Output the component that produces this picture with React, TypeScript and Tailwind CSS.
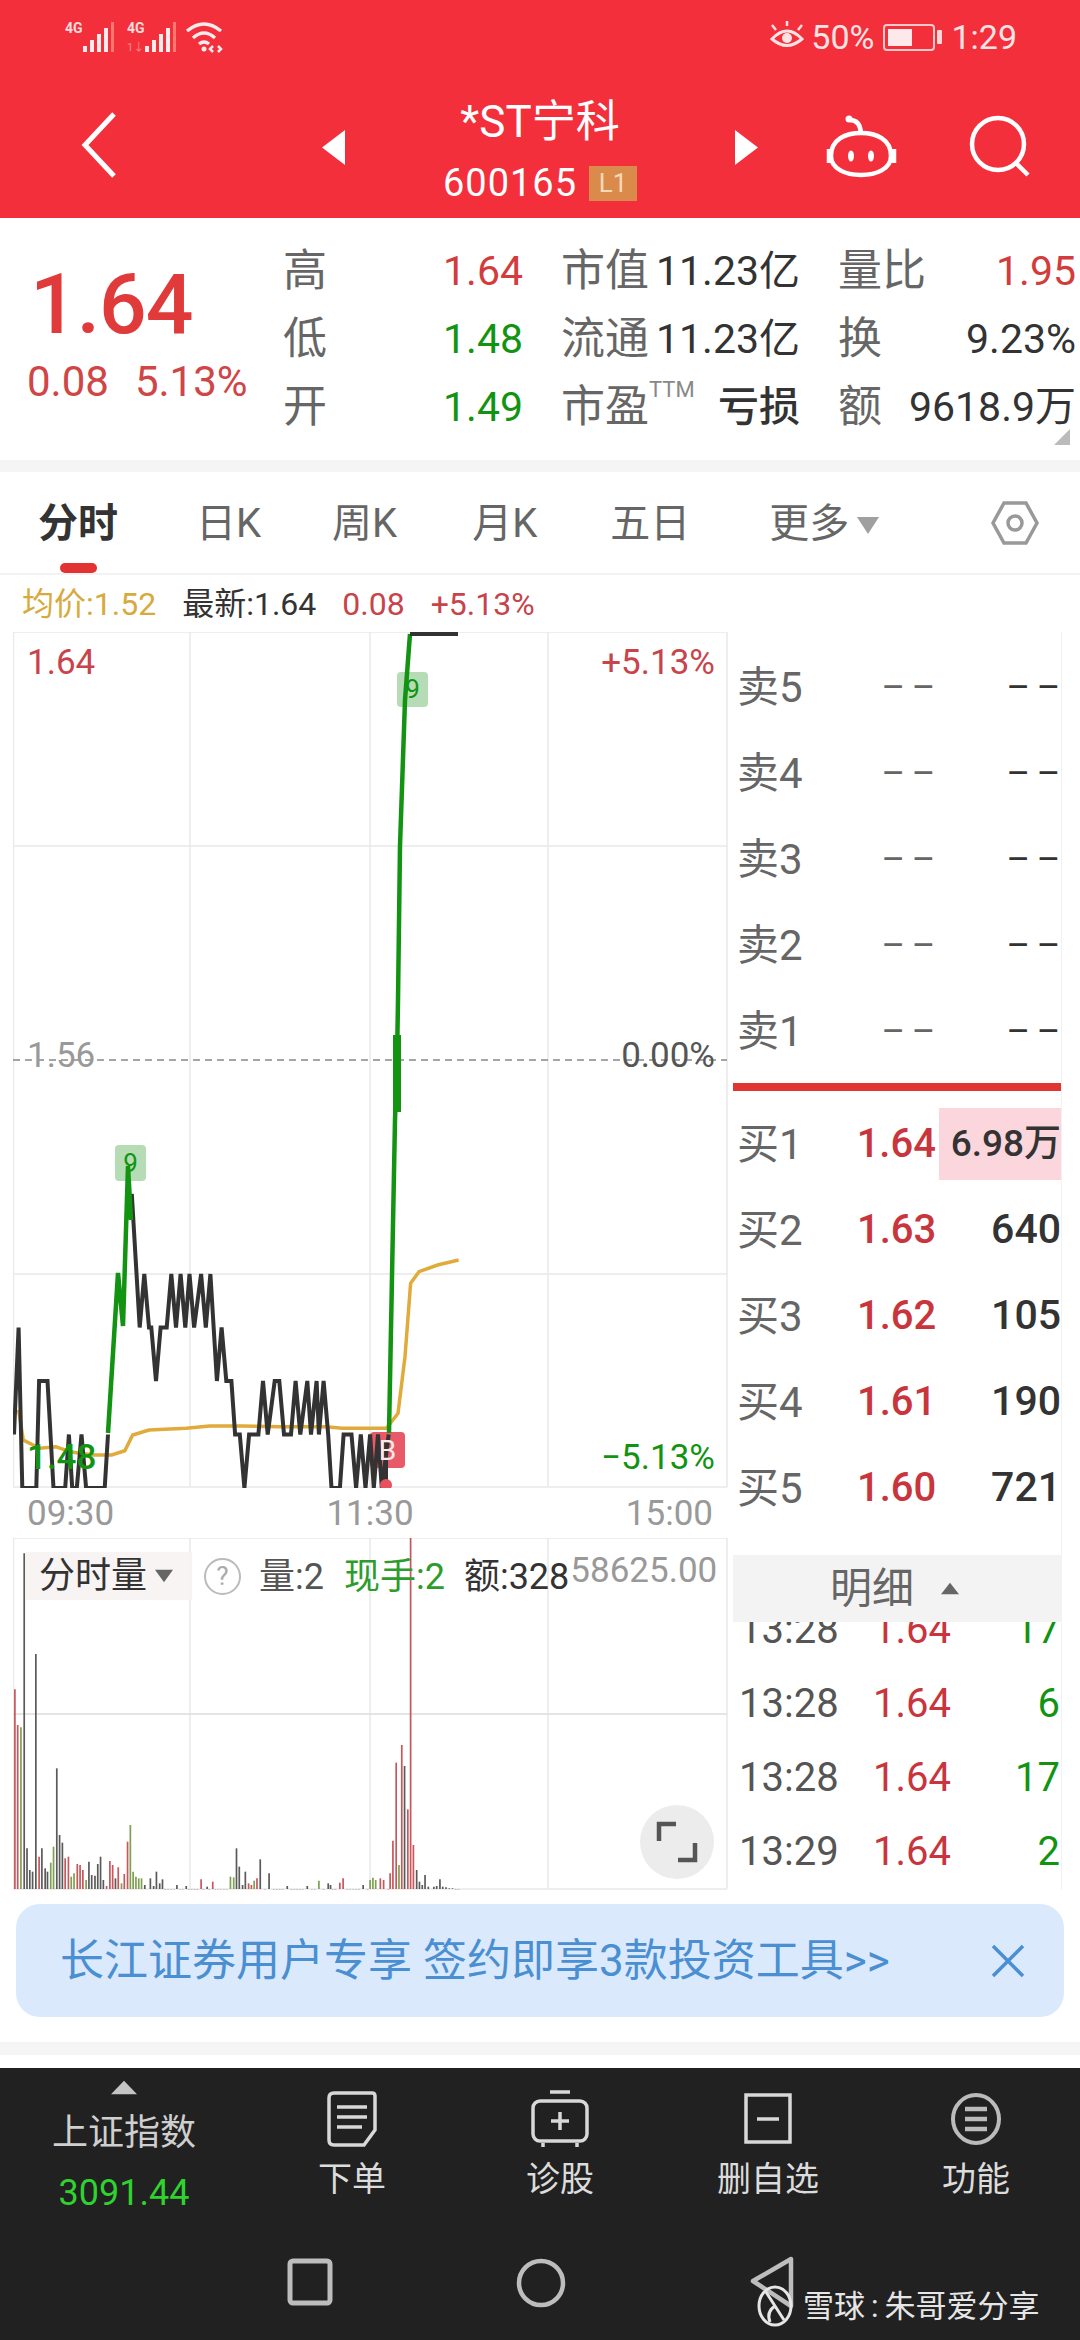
import React from "react";

// price levels are read off the chart: 0.01 is about 53.5px, 1.64 sits on the top edge
const priceY = (level: number) => 632 + (1.64 - level) * 5350;
const zx = (x: number) => x / 2.148;
const zy = (y: number) => 1030 + y / 3;

const blackLine: Array<[number, number]> = [
  [30, 1.49], [40, 1.51], [48, 1.48], [78, 1.48], [84, 1.5], [102, 1.5], [115, 1.48], [140, 1.48], [148, 1.49],
  [155, 1.48], [165, 1.48], [175, 1.49], [185, 1.48], [225, 1.48], [232, 1.49],
];
const blackLine2: Array<[number, number]> = [
  [283, 1.535], [300, 1.51], [310, 1.52], [320, 1.51], [325, 1.51], [335, 1.5], [345, 1.51], [358, 1.51], [368, 1.52],
  [378, 1.51], [388, 1.52], [398, 1.51], [407, 1.52], [417, 1.51], [432, 1.52], [442, 1.51], [452, 1.52], [466, 1.5],
  [476, 1.51], [486, 1.5], [497, 1.5], [505, 1.49], [515, 1.49], [525, 1.48], [535, 1.49], [555, 1.49], [565, 1.5],
  [575, 1.49], [590, 1.5], [600, 1.5], [610, 1.49], [625, 1.49], [635, 1.5], [645, 1.49], [660, 1.5], [668, 1.49],
  [680, 1.5], [685, 1.49], [695, 1.5], [705, 1.49], [712, 1.48], [730, 1.48], [738, 1.49], [755, 1.49], [765, 1.48],
  [775, 1.49], [785, 1.48], [795, 1.49], [803, 1.48], [812, 1.49], [820, 1.48], [835, 1.49],
];
const avgLine: Array<[number, number]> = [
  [40, 1140], [50, 1230], [85, 1255], [120, 1250], [150, 1265], [200, 1275], [240, 1275], [268, 1262], [285, 1215],
  [320, 1200], [400, 1195], [450, 1188], [520, 1188], [600, 1190], [700, 1190], [735, 1195], [830, 1195], [855, 1150],
  [870, 980], [882, 760], [900, 725], [940, 705], [985, 690],
];

const toPoints = (rows: Array<[number, number]>) => rows.map(([x, l]) => `${zx(x).toFixed(1)},${priceY(l).toFixed(1)}`).join(" ");

// volume bars: zoomed x, zoomed top, colour
const bars: Array<[number, number, string]> = [
  [32, 478, "r"], [38, 585, "r"], [45, 592, "g"], [52, 70, "k"], [58, 955, "k"], [64, 1020, "k"], [70, 1025, "k"], [77, 372, "k"],
  [84, 980, "r"], [90, 955, "k"], [97, 1015, "k"], [102, 1025, "k"], [109, 998, "g"], [115, 950, "g"], [122, 715, "k"], [128, 915, "k"],
  [134, 938, "k"], [140, 985, "r"], [147, 980, "r"], [153, 1040, "g"], [159, 1030, "g"], [166, 1002, "r"], [172, 1005, "r"], [178, 1020, "r"],
  [185, 1050, "g"], [191, 995, "k"], [197, 1035, "k"], [204, 1037, "k"], [210, 1002, "k"], [216, 980, "k"], [222, 1050, "k"], [229, 1068, "r"],
  [236, 993, "r"], [242, 1005, "r"], [248, 1045, "k"], [254, 1012, "r"], [261, 1060, "g"], [267, 1032, "r"], [274, 935, "r"], [280, 885, "g"],
  [286, 1025, "g"], [292, 1040, "g"], [298, 1045, "g"], [304, 1045, "g"], [311, 1065, "k"], [323, 1045, "k"], [330, 1068, "k"], [336, 1025, "k"],
  [343, 1060, "k"], [349, 1048, "k"], [380, 1065, "k"], [400, 1068, "k"], [432, 1048, "r"], [445, 1070, "k"], [457, 1055, "r"], [495, 1040, "g"],
  [502, 1042, "g"], [508, 955, "k"], [514, 1010, "k"], [521, 1065, "k"], [527, 1025, "k"], [534, 1060, "r"], [540, 1065, "r"], [546, 1052, "g"],
  [552, 1045, "r"], [559, 988, "k"], [578, 1030, "k"], [617, 1068, "k"], [660, 1068, "k"], [685, 1052, "g"], [705, 1060, "k"], [710, 1065, "k"],
  [730, 1058, "r"], [737, 1045, "r"], [780, 1065, "k"], [795, 1050, "g"], [801, 1043, "g"], [807, 1050, "g"], [817, 1045, "r"], [824, 1050, "r"],
  [838, 1030, "r"], [844, 932, "r"], [851, 698, "r"], [857, 1005, "g"], [863, 645, "r"], [869, 708, "k"], [876, 838, "r"], [882, 22, "r"],
  [888, 945, "r"], [895, 1020, "k"], [901, 1055, "k"], [907, 1065, "k"], [913, 1035, "k"], [920, 1070, "k"], [932, 1070, "k"], [938, 1068, "k"],
  [945, 1048, "k"], [951, 1070, "k"], [958, 1072, "k"], [965, 1075, "k"], [972, 1075, "k"], [985, 1078, "k"],
];
const barColor: Record<string, string> = { r: "#c9565a", g: "#7f9f52", k: "#5a5a5a" };

const allBars = (() => {
  const out = [...bars];
  for (let x = 355, i = 0; x < 985; x += 6.3, i++) {
    if (!bars.some((b) => Math.abs(b[0] - x) < 4)) out.push([x, 1078 - (i * 7) % 7, "k"]);
  }
  return out;
})();

const asks = ["卖5", "卖4", "卖3", "卖2", "卖1"];
const bids = [
  { label: "买1", price: "1.64", vol: "6.98万" },
  { label: "买2", price: "1.63", vol: "640" },
  { label: "买3", price: "1.62", vol: "105" },
  { label: "买4", price: "1.61", vol: "190" },
  { label: "买5", price: "1.60", vol: "721" },
];
const ticks = [
  { t: "13:28", v: "17" },
  { t: "13:28", v: "6" },
  { t: "13:28", v: "17" },
  { t: "13:29", v: "2" },
];

function Signal({ extra }: { extra?: boolean }) {
  return (
    <div className="relative w-[54px] h-[34px]">
      <span className="absolute left-0 top-[1px] text-[14px] leading-[14px] font-bold text-[#fbdada]">4G</span>
      {extra && <span className="absolute left-0 bottom-0 text-[11px] leading-[12px] text-[#f88]">1↓</span>}
      <svg className="absolute left-[17px] top-0" width="36" height="34" viewBox="0 0 36 34" fill="#fdeaea">
        <rect x="1" y="26" width="4" height="6" />
        <rect x="8" y="20" width="4" height="12" />
        <rect x="15" y="14" width="4" height="18" />
        <rect x="22" y="8" width="4" height="24" />
        <rect x="29" y="2" width="3" height="30" fill="#f98" opacity="0.7" />
      </svg>
    </div>
  );
}

function Tri({ dir, className }: { dir: "up" | "down" | "left" | "right"; className: string }) {
  const pts = { up: "50,5 100,95 0,95", down: "0,5 100,5 50,95", left: "100,0 100,100 0,50", right: "0,0 0,100 100,50" }[dir];
  return (
    <svg className={className} viewBox="0 0 100 100" preserveAspectRatio="none" fill="currentColor">
      <polygon points={pts} />
    </svg>
  );
}

function Header() {
  return (
    <div className="h-[218px] bg-[#f42f3c] text-white shrink-0">
      <div className="h-[74px] flex items-center pl-[65px] pr-[63px]">
        <Signal />
        <div className="w-[8px]" />
        <Signal extra />
        <svg className="ml-[4px]" width="40" height="34" viewBox="0 0 40 34" fill="none" stroke="#fdeaea" strokeWidth="3.5">
          <path d="M2 11 Q19 -3 36 11" />
          <path d="M8 18 Q19 8 30 18" />
          <path d="M14 24 Q19 20 24 24" />
          <circle cx="19" cy="29" r="2.5" fill="#fdeaea" stroke="none" />
          <path d="M28 26 l-3 3 3 3 M33 26 l3 3 -3 3" strokeWidth="2.5" />
        </svg>
        <div className="flex-1" />
        <svg width="36" height="32" viewBox="0 0 36 32" fill="none" stroke="#fde3e3" strokeWidth="3">
          <path d="M3 18 Q18 2 33 18 Q18 31 3 18Z" />
          <circle cx="18" cy="17" r="5" fill="#fde3e3" stroke="none" />
          <path d="M7 9 L3 4 M18 5 V0 M29 9 L33 4" strokeWidth="2.5" />
        </svg>
        <span className="ml-[6px] text-[34px] leading-none text-[#fde3e3]">50%</span>
        <div className="ml-[9px] w-[52px] h-[27px] border-2 border-[#fbc9c9] rounded-[4px] p-[3px]">
          <div className="w-[24px] h-full bg-[#fde9e9]" />
        </div>
        <div className="ml-[2px] w-[5px] h-[14px] bg-[#fbd9d9] rounded-[1px]" />
        <span className="ml-[9px] text-[34px] leading-none text-[#fde3e3]">1:29</span>
      </div>
      <div className="h-[144px] flex items-start">
        <svg className="ml-[80px] mt-[38px]" width="38" height="66" viewBox="0 0 38 66" fill="none" stroke="#fff" strokeWidth="5">
          <path d="M34 2 L5 33 L34 64" />
        </svg>
        <Tri dir="left" className="ml-[204px] mt-[56px] w-[23px] h-[35px]" />
        <div className="w-[390px] flex flex-col items-center">
          <div className="mt-[22px] text-[44px] leading-[52px]">*ST宁科</div>
          <div className="mt-[13px] flex items-center">
            <span className="text-[38px] leading-[44px] tracking-[1px]">600165</span>
            <span className="ml-[12px] w-[48px] h-[35px] bg-[#da8b4b] text-[#f6d9b9] text-[26px] leading-[35px] text-center">L1</span>
          </div>
        </div>
        <Tri dir="right" className="mt-[56px] w-[23px] h-[35px]" />
        <svg className="ml-[68px] mt-[39px]" width="72" height="66" viewBox="0 0 72 66" fill="none" stroke="#fff" strokeWidth="4.5">
          <path d="M24 7 Q34 7 35 20" />
          <circle cx="23" cy="6" r="3.5" fill="#fff" stroke="none" />
          <path d="M5 43 C5 26 20 20 35 20 C50 20 65 26 65 43 C65 56 50 62 35 62 C20 62 5 56 5 43Z" />
          <path d="M3 36 V50 M68 36 V50" />
          <ellipse cx="25" cy="43" rx="3" ry="5.5" fill="#fff" stroke="none" />
          <ellipse cx="45" cy="43" rx="3" ry="5.5" fill="#fff" stroke="none" />
        </svg>
        <svg className="ml-[70px] mt-[41px]" width="64" height="64" viewBox="0 0 64 64" fill="none" stroke="#fff" strokeWidth="4.5">
          <circle cx="30" cy="29" r="26" />
          <path d="M47 47 L60 60" />
        </svg>
      </div>
    </div>
  );
}

function Cell({ label, value, valueClass }: { label: React.ReactNode; value: string; valueClass: string }) {
  return (
    <div className="flex items-center justify-between">
      <span className="text-[44px] leading-none text-[#666] whitespace-nowrap">{label}</span>
      <span className={`text-[41px] leading-none whitespace-nowrap ${valueClass}`}>{value}</span>
    </div>
  );
}

function Quote() {
  return (
    <div className="h-[242px] shrink-0 bg-white flex relative">
      <div className="w-[283px] pl-[27px] pt-[43px]">
        <div className="pl-[3px] text-[84px] leading-[88px] font-medium text-[#e03a3a] tracking-[-1px]">1.64</div>
        <div className="mt-[9px] text-[42px] leading-[48px] text-[#d04545] whitespace-nowrap">0.08<span className="ml-[26px]">5.13%</span></div>
      </div>
      <div className="flex-1 pt-[19px] grid grid-cols-[240px_239px_238px] gap-x-[38px] auto-rows-[68px] items-center">
        <Cell label="高" value="1.64" valueClass="text-[#d23c3c]" />
        <Cell label="市值" value="11.23亿" valueClass="text-[#333]" />
        <Cell label="量比" value="1.95" valueClass="text-[#d23c3c]" />
        <Cell label="低" value="1.48" valueClass="text-[#129412]" />
        <Cell label="流通" value="11.23亿" valueClass="text-[#333]" />
        <Cell label="换" value="9.23%" valueClass="text-[#333]" />
        <Cell label="开" value="1.49" valueClass="text-[#129412]" />
        <Cell label={<>市盈<sup className="text-[22px] text-[#888] align-[14px]">TTM</sup></>} value="亏损" valueClass="text-[#333] font-medium" />
        <Cell label="额" value="9618.9万" valueClass="text-[#333]" />
      </div>
      <svg className="absolute right-[10px] bottom-[15px]" width="16" height="16" viewBox="0 0 16 16" fill="#bbb">
        <polygon points="16,0 16,16 0,16" />
      </svg>
    </div>
  );
}

function Tabs() {
  return (
    <div className="h-[103px] shrink-0 bg-white border-b-2 border-[#f2f2f2] flex items-start text-[40px] leading-[44px] text-[#666]">
      <div className="ml-[38px] relative mt-[30px] font-bold text-[#333]">
        分时
        <div className="absolute left-[22px] top-[61px] w-[37px] h-[10px] rounded-full bg-[#e33232]" />
      </div>
      <div className="ml-[78px] mt-[30px]">日K</div>
      <div className="ml-[71px] mt-[30px]">周K</div>
      <div className="ml-[75px] mt-[30px]">月K</div>
      <div className="ml-[73px] mt-[30px]">五日</div>
      <div className="ml-[79px] mt-[30px]">更多</div>
      <Tri dir="down" className="ml-[8px] mt-[44px] w-[22px] h-[19px] text-[#a0a0a0]" />
      <svg className="ml-[111px] mt-[28px]" width="50" height="46" viewBox="0 0 50 46" fill="none" stroke="#999" strokeWidth="3.5">
        <polygon points="14,3 36,3 47,23 36,43 14,43 3,23" />
        <circle cx="25" cy="23" r="7" />
      </svg>
    </div>
  );
}

function PriceChart() {
  return (
    <div className="relative h-[856px] ml-[13px] w-[715px]">
      <svg className="absolute left-0 top-0" width="715" height="856" viewBox="13 632 715 856" fill="none">
        <g stroke="#e9e9e9" strokeWidth="1.5">
          {[632, 846, 1274, 1487].map((y) => <line key={y} x1="13" x2="727" y1={y} y2={y} />)}
          {[13.5, 190, 370, 548, 727].map((x) => <line key={x} x1={x} x2={x} y1="632" y2="1487" />)}
        </g>
        <line x1="13" x2="727" y1="1060" y2="1060" stroke="#888" strokeWidth="1.5" strokeDasharray="7 5" />
        <polyline points={avgLine.map(([x, y]) => `${zx(x).toFixed(1)},${zy(y).toFixed(1)}`).join(" ")} stroke="#e0ab3a" strokeWidth="3.5" />
        <rect x="397" y="672" width="31" height="35" rx="4" fill="#b5dcb5" />
        <rect x="115" y="1145" width="31" height="36" rx="4" fill="#b5dcb5" />
        <rect x="370" y="1432" width="35" height="36" rx="4" fill="#e85a68" />
        <polyline points={toPoints(blackLine)} stroke="#333" strokeWidth="4" />
        <polyline points={toPoints(blackLine2)} stroke="#333" strokeWidth="4" />
        <line x1="386" y1="1440" x2="386" y2="1485" stroke="#333" strokeWidth="4" />
        <polyline points="108,1433 118,1273 123,1326 128,1166 131,1220" stroke="#129412" strokeWidth="4.5" />
        <polyline points="389,1433 395,1120 397,1060 398,1000 400,846 405,700 410,634" stroke="#129412" strokeWidth="4.5" />
        <line x1="397" y1="1035" x2="397" y2="1112" stroke="#129412" strokeWidth="8" />
        <line x1="410" y1="634" x2="458" y2="634" stroke="#333" strokeWidth="4" />
        <circle cx="386" cy="1485" r="6" fill="#e8505f" />
      </svg>
      <span className="absolute left-[14px] top-[11px] text-[35px] leading-[40px] text-[#c8434a]">1.64</span>
      <span className="absolute right-[13px] top-[11px] text-[35px] leading-[40px] text-[#c8434a]">+5.13%</span>
      <span className="absolute left-[14px] top-[404px] text-[35px] leading-[40px] text-[#999]">1.56</span>
      <span className="absolute right-[13px] top-[404px] text-[35px] leading-[40px] text-[#555]">0.00%</span>
      <span className="absolute left-[14px] top-[806px] text-[35px] leading-[40px] font-medium text-[#129412]">1.48</span>
      <span className="absolute right-[13px] top-[806px] text-[35px] leading-[40px] text-[#129412]">−5.13%</span>
      <span className="absolute left-[384px] top-[42px] w-[31px] text-center text-[26px] leading-[30px] text-[#129412]">9</span>
      <span className="absolute left-[102px] top-[516px] w-[31px] text-center text-[26px] leading-[30px] text-[#129412]">9</span>
      <span className="absolute left-[357px] top-[802px] w-[35px] text-center text-[28px] leading-[34px] text-[#fdeaea]">B</span>
    </div>
  );
}

function VolumeChart() {
  return (
    <div className="relative h-[352px] ml-[13px] w-[715px]">
      <svg className="absolute left-0 top-0" width="715" height="352" viewBox="13 1538 715 352" fill="none">
        <g stroke="#e9e9e9" strokeWidth="1.5">
          {[1538, 1889].map((y) => <line key={y} x1="13" x2="727" y1={y} y2={y} />)}
          {[13.5, 190, 370, 548, 727].map((x) => <line key={x} x1={x} x2={x} y1="1538" y2="1889" />)}
        </g>
        <line x1="13" x2="727" y1="1714" y2="1714" stroke="#dcdcdc" strokeWidth="1.5" />
        {allBars.map(([x, top, c], i) => (
          <line key={i} x1={zx(x)} x2={zx(x)} y1={1530 + top / 3} y2="1889" stroke={barColor[c]} strokeWidth="1.7" />
        ))}
      </svg>
      <div className="relative flex items-start pt-[14px] whitespace-nowrap">
        <div className="ml-[12px] w-[167px] h-[48px] bg-[#f7f3f3]/90 flex items-center pl-[14px] text-[36px] leading-none text-[#333]">
          分时量
          <Tri dir="down" className="ml-[8px] w-[18px] h-[14px] text-[#666]" />
        </div>
        <div className="ml-[12px] mt-[6px] w-[37px] h-[37px] rounded-full border-2 border-[#bbb] text-center text-[26px] leading-[33px] text-[#aaa]">?</div>
        <div className="ml-[18px] mt-[6px] text-[36px] leading-[38px] text-[#555]">量:2</div>
        <div className="ml-[20px] mt-[6px] text-[36px] leading-[38px] text-[#2c9c2c]">现手:2</div>
        <div className="ml-[19px] mt-[6px] text-[36px] leading-[38px] text-[#333]">额:328</div>
        <div className="ml-[1px] text-[35px] leading-[38px] text-[#999]">58625.00</div>
      </div>
      <div className="absolute left-[627px] top-[267px] w-[74px] h-[74px] rounded-full bg-[#ececec] flex items-center justify-center">
        <svg width="42" height="42" viewBox="0 0 42 42" fill="none" stroke="#555" strokeWidth="4.5">
          <path d="M3 20 V3 H20 M39 22 V39 H22" />
        </svg>
      </div>
    </div>
  );
}

function OrderBook() {
  return (
    <div className="w-[329px] ml-[5px] h-[1258px] overflow-hidden border-r border-[#f2f2f2]">
      <div className="pt-[12px]">
        {asks.map((a) => (
          <div key={a} className="h-[86px] flex items-center pl-[4px] pr-[1px] text-[42px] text-[#666]">
            <span className="w-[146px] whitespace-nowrap">{a}</span>
            <span className="flex-1 text-[26px] font-bold text-[#666] tracking-[2px]">— —</span>
            <span className="text-[26px] font-bold text-[#333] tracking-[2px]">— —</span>
          </div>
        ))}
      </div>
      <div className="mt-[9px] h-[8px] bg-[#e03530]" />
      <div className="mt-[10px]">
        {bids.map((b, i) => (
          <div key={b.label} className="h-[86px] flex items-center pl-[4px] text-[40px] text-[#666]">
            <span className="w-[120px] text-[42px] whitespace-nowrap">{b.label}</span>
            <span className="text-[#c8353c] font-medium w-[82px]">{b.price}</span>
            {i === 0 ? (
              <span className="ml-[1px] w-[122px] h-[72px] bg-[#fbd6dd] text-right text-[37px] leading-[72px] text-[#333] font-medium whitespace-nowrap">{b.vol}</span>
            ) : (
              <span className="flex-1 text-right text-[#333] font-medium text-[41px]">{b.vol}</span>
            )}
          </div>
        ))}
      </div>
      <div className="relative z-10 mt-[24px] h-[67px] bg-[#f3f3f3] flex items-center text-[42px] text-[#666]">
        <span className="ml-[97px]">明细</span>
        <Tri dir="up" className="ml-[27px] w-[18px] h-[13px] text-[#666]" />
      </div>
      <div className="-mt-[29px]">
        {ticks.map((row, i) => (
          <div key={i} className="h-[74px] flex items-center pl-[6px] pr-[1px] text-[40px]">
            <span className="w-[134px] text-[#555]">{row.t}</span>
            <span className="text-[#c8353c]">1.64</span>
            <span className="flex-1 text-right text-[#129412]">{row.v}</span>
          </div>
        ))}
      </div>
    </div>
  );
}

function Banner() {
  return (
    <div className="shrink-0 bg-white pt-[14px] px-[16px] pb-[25px] border-b-[13px] border-[#f5f5f5]">
      <div className="h-[113px] bg-[#dbe9fc] rounded-[24px] flex items-center pl-[44px] pr-[38px] text-[44px] text-[#4a8fd2]">
        <span className="whitespace-nowrap">长江证券用户专享 签约即享3款投资工具&gt;&gt;</span>
        <div className="flex-1" />
        <svg width="36" height="36" viewBox="0 0 36 36" fill="none" stroke="#4a8fd2" strokeWidth="3.5">
          <path d="M3 3 L33 33 M33 3 L3 33" />
        </svg>
      </div>
    </div>
  );
}

const Stroke = { fill: "none", stroke: "#d8d8d8", strokeWidth: 3.5 };

function BottomBar() {
  return (
    <div className="flex-1 bg-[#212121] relative">
      <div className="h-[190px] flex">
        <div className="w-[248px] flex flex-col items-center pt-[12px]">
          <Tri dir="up" className="w-[26px] h-[15px] text-[#c4c4c4]" />
          <div className="mt-[16px] text-[36px] leading-[44px] text-[#cfcfcf]">上证指数</div>
          <div className="mt-[17px] text-[36px] leading-[42px] text-[#2fd22f]">3091.44</div>
        </div>
        <div className="flex-1 grid grid-cols-4">
          {[
            {
              label: "下单",
              icon: (
                <svg width="52" height="58" viewBox="0 0 52 58" {...Stroke}>
                  <path d="M8 3 H46 Q49 3 49 6 V40 L38 55 H8 Q3 55 3 50 V8 Q3 3 8 3Z" />
                  <path d="M11 17 H41 M11 27 H41 M11 37 H36" />
                </svg>
              ),
            },
            {
              label: "诊股",
              icon: (
                <svg width="58" height="58" viewBox="0 0 58 58" {...Stroke}>
                  <path d="M19 2 H39" />
                  <rect x="2" y="11" width="54" height="40" rx="7" />
                  <path d="M29 22 V40 M20 31 H38 M12 53 V57 M46 53 V57" />
                </svg>
              ),
            },
            {
              label: "删自选",
              icon: (
                <svg width="50" height="52" viewBox="0 0 50 52" {...Stroke}>
                  <rect x="3" y="2" width="44" height="47" />
                  <path d="M14 26 H36" />
                </svg>
              ),
            },
            {
              label: "功能",
              icon: (
                <svg width="52" height="54" viewBox="0 0 52 54" fill="none" stroke="#bbb" strokeWidth="4">
                  <ellipse cx="26" cy="27" rx="23" ry="24" />
                  <path d="M15 17 H37 M15 27 H37 M15 37 H37" strokeWidth="4.5" />
                </svg>
              ),
            },
          ].map((t) => (
            <div key={t.label} className="flex flex-col items-center">
              <div className="h-[80px] mt-[11px] flex items-center">{t.icon}</div>
              <div className="text-[34px] leading-[40px] text-[#dcdcdc]">{t.label}</div>
            </div>
          ))}
        </div>
      </div>
      <div className="flex items-start pl-[287px]">
        <svg width="46" height="48" viewBox="0 0 46 48" fill="none" stroke="#bdbdbd" strokeWidth="5">
          <rect x="3" y="3" width="40" height="42" rx="3" />
        </svg>
        <svg className="ml-[183px]" width="50" height="50" viewBox="0 0 50 50" fill="none" stroke="#bdbdbd" strokeWidth="4.5">
          <circle cx="25" cy="25" r="22" />
        </svg>
        <svg className="ml-[184px] -mt-[2px]" width="46" height="68" viewBox="0 0 46 68" fill="none" stroke="#bdbdbd" strokeWidth="4.5">
          <path d="M41 3 V50 L3 25Z" strokeLinejoin="round" />
        </svg>
      </div>
      <div className="absolute left-[756px] top-[216px] flex items-center text-[31px] leading-none text-[#e6e6e6] whitespace-nowrap">
        <svg width="38" height="44" viewBox="0 0 38 44" fill="none" stroke="#e6e6e6" strokeWidth="3">
          <ellipse cx="19" cy="22" rx="16" ry="19" />
          <path d="M10 8 L28 36 M19 22 Q10 28 14 38" />
        </svg>
        <span className="ml-[9px]">雪球<span className="mx-[6px]">:</span>朱哥爱分享</span>
      </div>
    </div>
  );
}

export default function App() {
  return (
    <div className="w-[1080px] h-[2340px] bg-white flex flex-col overflow-hidden font-['Roboto','Noto_Sans_CJK_SC',sans-serif]">
      <Header />
      <Quote />
      <div className="h-[12px] shrink-0 bg-[#f5f5f5]" />
      <Tabs />
      <div className="h-[57px] shrink-0 flex items-center pl-[22px] text-[32px] leading-none whitespace-nowrap">
        <span className="text-[#d6aa3c]">均价:1.52</span>
        <span className="ml-[26px] text-[#333]">最新:1.64</span>
        <span className="ml-[26px] text-[#c8434a]">0.08</span>
        <span className="ml-[26px] text-[#c8434a]">+5.13%</span>
      </div>
      <div className="flex shrink-0">
        <div className="w-[728px] flex flex-col">
          <PriceChart />
          <div className="h-[50px] flex items-center justify-between pl-[27px] pr-[15px] text-[35px] leading-none text-[#999]">
            <span>09:30</span>
            <span>11:30</span>
            <span>15:00</span>
          </div>
          <VolumeChart />
        </div>
        <OrderBook />
      </div>
      <Banner />
      <div className="h-[13px] shrink-0 bg-white" />
      <BottomBar />
    </div>
  );
}
